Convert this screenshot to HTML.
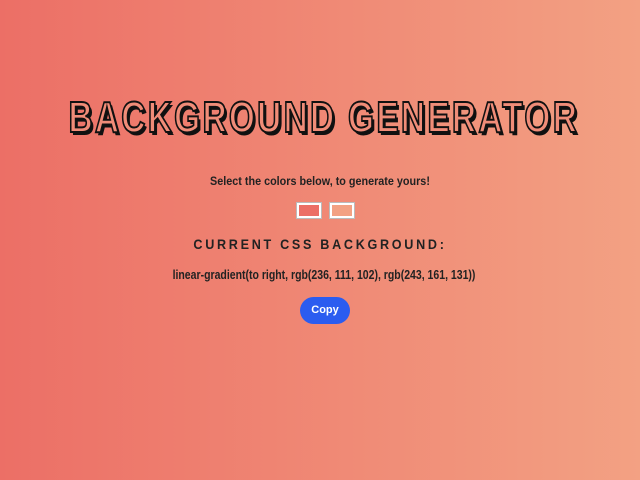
<!DOCTYPE html>
<html><head><meta charset="utf-8"><style>
html,body{margin:0;padding:0;width:640px;height:480px;overflow:hidden}
body{background:linear-gradient(to right,rgb(236,111,102),rgb(243,161,131));font-family:"Liberation Sans",sans-serif;text-align:center;position:relative}
h1{position:absolute;left:-100px;right:-100px;top:93px;margin:0;font-size:44px;font-weight:bold;letter-spacing:3px;color:rgba(240,140,120,1);-webkit-text-stroke:2px #111;text-shadow:3px 3px 0 #111;transform:scaleX(0.76);white-space:nowrap;padding-left:10px}
.sub{position:absolute;left:0;right:0;top:174px;font-size:12px;font-weight:bold;color:#222;transform:scaleX(0.9)}
.b{position:absolute;top:203px;width:20px;height:11px;border:2px solid #fff;box-shadow:0 0 0 1px #bbb}
.h3{position:absolute;left:0;right:0;top:236px;font-size:14px;font-weight:bold;letter-spacing:3px;color:#222;transform:scaleX(0.9)}
.code{position:absolute;left:8px;right:0;top:268px;font-size:12.5px;font-weight:bold;color:#222;transform:scaleX(0.84)}
.btn{position:absolute;left:300px;top:297px;width:50px;height:27px;border-radius:14px;background:#2b5cf0;color:#fff;font-size:11px;font-weight:bold;line-height:27px}
</style></head><body>
<h1>BACKGROUND GENERATOR</h1>
<div class="sub">Select the colors below, to generate yours!</div>
<div class="b" style="left:297px;background:rgb(236,111,102)"></div>
<div class="b" style="left:330px;background:rgb(243,161,131)"></div>
<div class="h3">CURRENT CSS BACKGROUND:</div>
<div class="code">linear-gradient(to right, rgb(236, 111, 102), rgb(243, 161, 131))</div>
<div class="btn">Copy</div>
</body></html>
